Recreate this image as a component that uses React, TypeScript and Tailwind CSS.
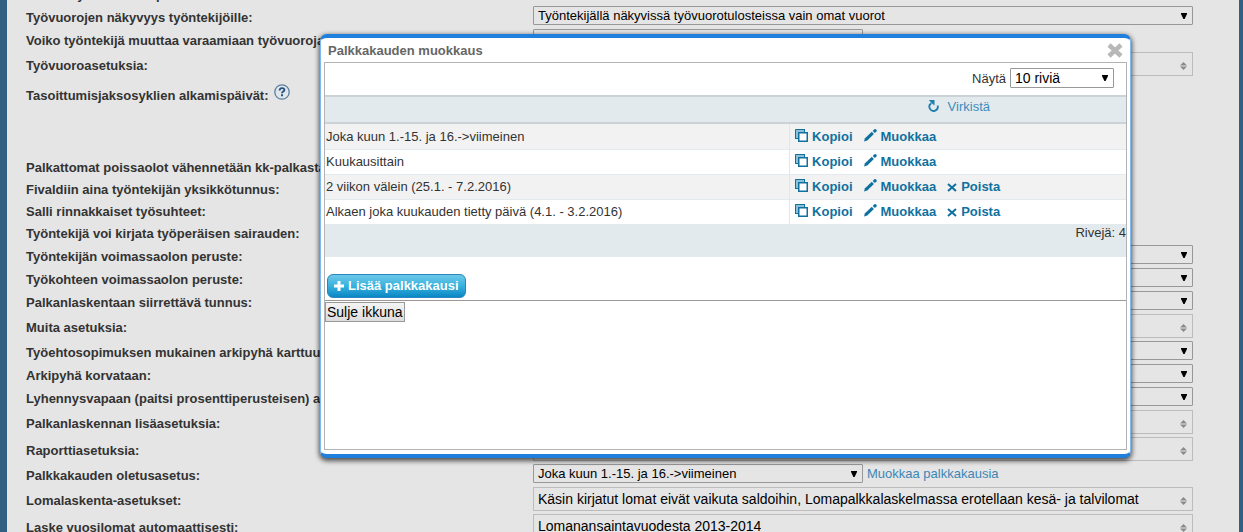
import { useState } from "react";

interface Setting {
  label: string;
  kind: "select" | "multi" | "text" | "cycles";
  value?: string;
  short?: boolean;
  link?: string;
}

const settings: Setting[] = [
  { label: "Sallitut työvuorot eri päivinä:", kind: "text", value: "Näytä" },
  {
    label: "Työvuorojen näkyvyys työntekijöille:",
    kind: "select",
    value: "Työntekijällä näkyvissä työvuorotulosteissa vain omat vuorot",
  },
  {
    label: "Voiko työntekijä muuttaa varaamiaan työvuoroja:",
    kind: "select",
    value: "Työntekijä ei voi muuttaa vuoroja",
    short: true,
  },
  { label: "Työvuoroasetuksia:", kind: "multi" },
  { label: "Tasoittumisjaksosyklien alkamispäivät:", kind: "cycles" },
  { label: "Palkattomat poissaolot vähennetään kk-palkasta:", kind: "text" },
  { label: "Fivaldiin aina työntekijän yksikkötunnus:", kind: "text" },
  { label: "Salli rinnakkaiset työsuhteet:", kind: "text" },
  { label: "Työntekijä voi kirjata työperäisen sairauden:", kind: "text" },
  { label: "Työntekijän voimassaolon peruste:", kind: "select" },
  { label: "Työkohteen voimassaolon peruste:", kind: "select" },
  { label: "Palkanlaskentaan siirrettävä tunnus:", kind: "select" },
  { label: "Muita asetuksia:", kind: "multi" },
  { label: "Työehtosopimuksen mukainen arkipyhä karttuu:", kind: "select" },
  { label: "Arkipyhä korvataan:", kind: "select" },
  { label: "Lyhennysvapaan (paitsi prosenttiperusteisen) ajalta:", kind: "select" },
  { label: "Palkanlaskennan lisäasetuksia:", kind: "multi" },
  { label: "Raporttiasetuksia:", kind: "multi" },
  {
    label: "Palkkakauden oletusasetus:",
    kind: "select",
    value: "Joka kuun 1.-15. ja 16.->viimeinen",
    short: true,
    link: "Muokkaa palkkakausia",
  },
  {
    label: "Lomalaskenta-asetukset:",
    kind: "multi",
    value:
      "Käsin kirjatut lomat eivät vaikuta saldoihin, Lomapalkkalaskelmassa erotellaan kesä- ja talvilomat",
  },
  {
    label: "Laske vuosilomat automaattisesti:",
    kind: "multi",
    value: "Lomanansaintavuodesta 2013-2014",
  },
];

const periods = [
  { name: "Joka kuun 1.-15. ja 16.->viimeinen", removable: false },
  { name: "Kuukausittain", removable: false },
  { name: "2 viikon välein (25.1. - 7.2.2016)", removable: true },
  { name: "Alkaen joka kuukauden tietty päivä (4.1. - 3.2.2016)", removable: true },
];

const rowHeights = {
  select: "h-[23px]",
  multi: "h-[27px]",
  text: "h-[22px]",
  cycles: "h-[78px]",
};

function DropArrow() {
  return (
    <svg
      viewBox="0 0 6 6"
      className="pointer-events-none absolute inset-y-0 right-[6px] my-auto h-[6px] w-[6px]"
    >
      <path d="M0 0h6v1L3.6 6H2.4L0 1z" fill="#000" />
    </svg>
  );
}

function SortArrows() {
  return (
    <svg viewBox="0 0 7 8" className="mt-1 h-2 w-[7px] shrink-0">
      <path d="M3.5 0L7 3.5H0zM0 4.5h7L3.5 8z" fill="#8b8b8b" />
    </svg>
  );
}

function HelpIcon() {
  return (
    <svg viewBox="0 0 16 16" className="h-4 w-4">
      <circle cx="8" cy="8" r="7.2" fill="#dfe6ec" stroke="#5b7f9f" strokeWidth="1.3" />
      <path
        d="M5.6 6.4C5.600 3.400 10.400 3.400 10.400 6C10.400 7.500 8 7.500 8 9.300"
        fill="none"
        stroke="#28527c"
        strokeWidth="1.9"
      />
      <path d="M7 10.300h2v1.900H7z" fill="#28527c" />
    </svg>
  );
}

function CopyIcon() {
  return (
    <svg viewBox="0 0 13 13" className="h-[13px] w-[13px]">
      <path d="M0 0h10v3H3v7H0z" fill="#8fc0da" />
      <path d="M.5 10V.5H10M9.500 0v3M0 9.500h3" fill="none" stroke="#10719f" />
      <path d="M3.750 3.750h8.500v8.500h-8.500z" fill="#fff" stroke="#10719f" strokeWidth="1.500" />
    </svg>
  );
}

function PencilIcon() {
  return (
    <svg viewBox="0 0 13 13" className="h-[13px] w-[13px]" fill="#10719f">
      <path d="M0 12.500l1-3.300L7.800 2.800l2.100 2.100L3.300 11.500z" />
      <path d="M8.700 2L10.300.3Q11.300-.3 12.200.6T12.500 2.500L10.800 4.100z" />
    </svg>
  );
}

function DeleteIcon() {
  return (
    <svg viewBox="0 0 10 9" className="h-[9px] w-[10px]">
      <path d="M1 1l8 7M9 1L1 8" stroke="#10719f" strokeWidth="2" />
    </svg>
  );
}

function RefreshIcon() {
  return (
    <svg viewBox="0 0 11 12" className="-mt-[3px] h-3 w-[11px]">
      <path
        d="M9.600 5.500A4.200 4.200 0 1 1 3.300 3.200"
        fill="none"
        stroke="#1d7fae"
        strokeWidth="1.8"
      />
      <path d="M1 0h5.500v5.500L4.300 3.700L2.500 2z" fill="#1d7fae" />
    </svg>
  );
}

function SettingField({ setting, id }: { setting: Setting; id: string }) {
  const { kind, value = "", short, link } = setting;

  if (kind === "select") {
    return (
      <>
        <div className={`relative h-[19px] ${short ? "w-[330px]" : "w-full"}`}>
          <select
            id={id}
            className="block h-full w-full appearance-none rounded-[1px] border border-[#989898] bg-[#e5e5e5] pl-1 text-[13px] leading-4 text-black"
          >
            <option>{value}</option>
          </select>
          <DropArrow />
        </div>
        {link && (
          <a href="#palkkakaudet" className="ml-1 whitespace-nowrap text-[#3c87b5]">
            {link}
          </a>
        )}
      </>
    );
  }

  if (kind === "multi") {
    return (
      <button
        id={id}
        type="button"
        className="flex h-6 w-full items-center justify-between border border-[#bcbcbc] pr-[5px] pl-1 text-left text-[14px] text-black"
      >
        <span className="truncate">{value}</span>
        <SortArrows />
      </button>
    );
  }

  return <span className="pl-1 text-black">{value}</span>;
}

function SettingRow({ setting, index }: { setting: Setting; index: number }) {
  const id = `setting-${index}`;
  const cycles = setting.kind === "cycles";

  return (
    <div className={`flex ${rowHeights[setting.kind]} ${cycles ? "items-start pt-1" : "items-center"}`}>
      <div
        className={`flex w-[507px] shrink-0 gap-[5px] font-bold whitespace-nowrap ${
          cycles ? "items-start pt-[3px]" : "items-center pt-1"
        }`}
      >
        <label htmlFor={id} className={cycles ? "pt-1" : ""}>
          {setting.label}
        </label>
        {cycles && <HelpIcon />}
      </div>
      <div className="flex min-w-0 grow items-center">
        {!cycles && <SettingField setting={setting} id={id} />}
      </div>
    </div>
  );
}

function PeriodTable() {
  return (
    <table className="w-full table-fixed border-collapse">
      <colgroup>
        <col className="w-[58%]" />
        <col />
      </colgroup>
      <tbody>
        {periods.map((period) => (
          <tr key={period.name} className="h-[25px] border-b border-[#e3eaed] odd:bg-[#f2f2f2]">
            <td className="border-r border-[#e0e6e9] p-0 pt-px pl-px">{period.name}</td>
            <td className="p-0 pt-px pl-[5px]">
              <div className="flex gap-[11px] font-bold text-[#10719f]">
                <button type="button" className="flex gap-1">
                  <CopyIcon />
                  Kopioi
                </button>
                <button type="button" className="flex gap-1">
                  <PencilIcon />
                  Muokkaa
                </button>
                {period.removable && (
                  <button type="button" className="flex items-center gap-1">
                    <DeleteIcon />
                    Poista
                  </button>
                )}
              </div>
            </td>
          </tr>
        ))}
      </tbody>
      <tfoot>
        <tr className="h-[33px] bg-[#e3eaed]">
          <td colSpan={2} className="p-0 text-right align-top">
            Rivejä: {periods.length}
          </td>
        </tr>
      </tfoot>
    </table>
  );
}

function PeriodDialog({ onClose }: { onClose: () => void }) {
  return (
    <div
      role="dialog"
      aria-labelledby="dialog-title"
      className="absolute top-[34px] right-[108px] left-[313px] flex h-[424px] flex-col rounded-[7px] border-x border-t-4 border-b-4 border-x-[#7db8f0] border-y-[#1e80dc] bg-white px-[3px] pb-1 shadow-[0_2px_5px_1px_rgba(0,0,0,0.65)]"
    >
      <div className="flex h-6 items-center justify-between pt-px pr-1 pl-1">
        <h2 id="dialog-title" className="font-bold text-[#666]">
          Palkkakauden muokkaus
        </h2>
        <button type="button" aria-label="Sulje" onClick={onClose}>
          <svg viewBox="0 0 16 15" className="h-[15px] w-4">
            <path d="M2 2l12 11M14 2L2 13" stroke="#b8b8b8" strokeWidth="4.500" />
          </svg>
        </button>
      </div>

      <div className="grow border border-[#b3b3b3]">
        <div className="flex h-8 items-center justify-end gap-1 pr-3 pb-[2px]">
          <label htmlFor="page-size" className="pt-[2px]">
            Näytä
          </label>
          <div className="relative h-5 w-[104px]">
            <select
              id="page-size"
              className="block h-full w-full appearance-none rounded-[1px] border border-[#989898] bg-white pl-1 text-[14px] leading-4 text-black"
            >
              <option>10 riviä</option>
            </select>
            <DropArrow />
          </div>
        </div>

        <div className="flex h-[29px] justify-end border-y-2 border-[#cbd3d6] bg-[#e3eaed] pr-[136px]">
          <button type="button" className="flex h-5 items-center gap-[9px] text-[#3c8dbc]">
            <RefreshIcon />
            Virkistä
          </button>
        </div>

        <PeriodTable />

        <div className="flex h-11 items-end border-b border-[#999] px-[2px] pb-[2px]">
          <button
            type="button"
            className="flex h-6 items-center gap-1 rounded-[6px] border border-[#2a86bd] bg-linear-to-b from-[#6cc8e8] via-[#35b2dd] to-[#0787c6] px-[6px] font-bold text-white"
          >
            <svg viewBox="0 0 10 10" className="h-[10px] w-[10px]">
              <path d="M5 0v10M0 5h10" stroke="#fff" strokeWidth="3" />
            </svg>
            Lisää palkkakausi
          </button>
        </div>
        <button
          type="button"
          onClick={onClose}
          className="mt-px block h-5 border border-[#999] bg-linear-to-b from-[#f4f4f4] to-[#dddddd] px-px text-[14px] leading-4 text-black"
        >
          Sulje ikkuna
        </button>
      </div>
    </div>
  );
}

export default function App() {
  const [open, setOpen] = useState(true);

  return (
    <div className="relative h-screen overflow-hidden border-r-4 border-l-[7px] border-[#335f80] bg-[#e5e5e5] font-['Liberation_Sans',Arial,sans-serif] text-[13px] leading-4 text-[#333]">
      <form className="-mt-[18px] pr-[46px] pl-[19px]">
        {settings.map((setting, index) => (
          <SettingRow key={setting.label} setting={setting} index={index} />
        ))}
      </form>
      {open && <PeriodDialog onClose={() => setOpen(false)} />}
    </div>
  );
}
